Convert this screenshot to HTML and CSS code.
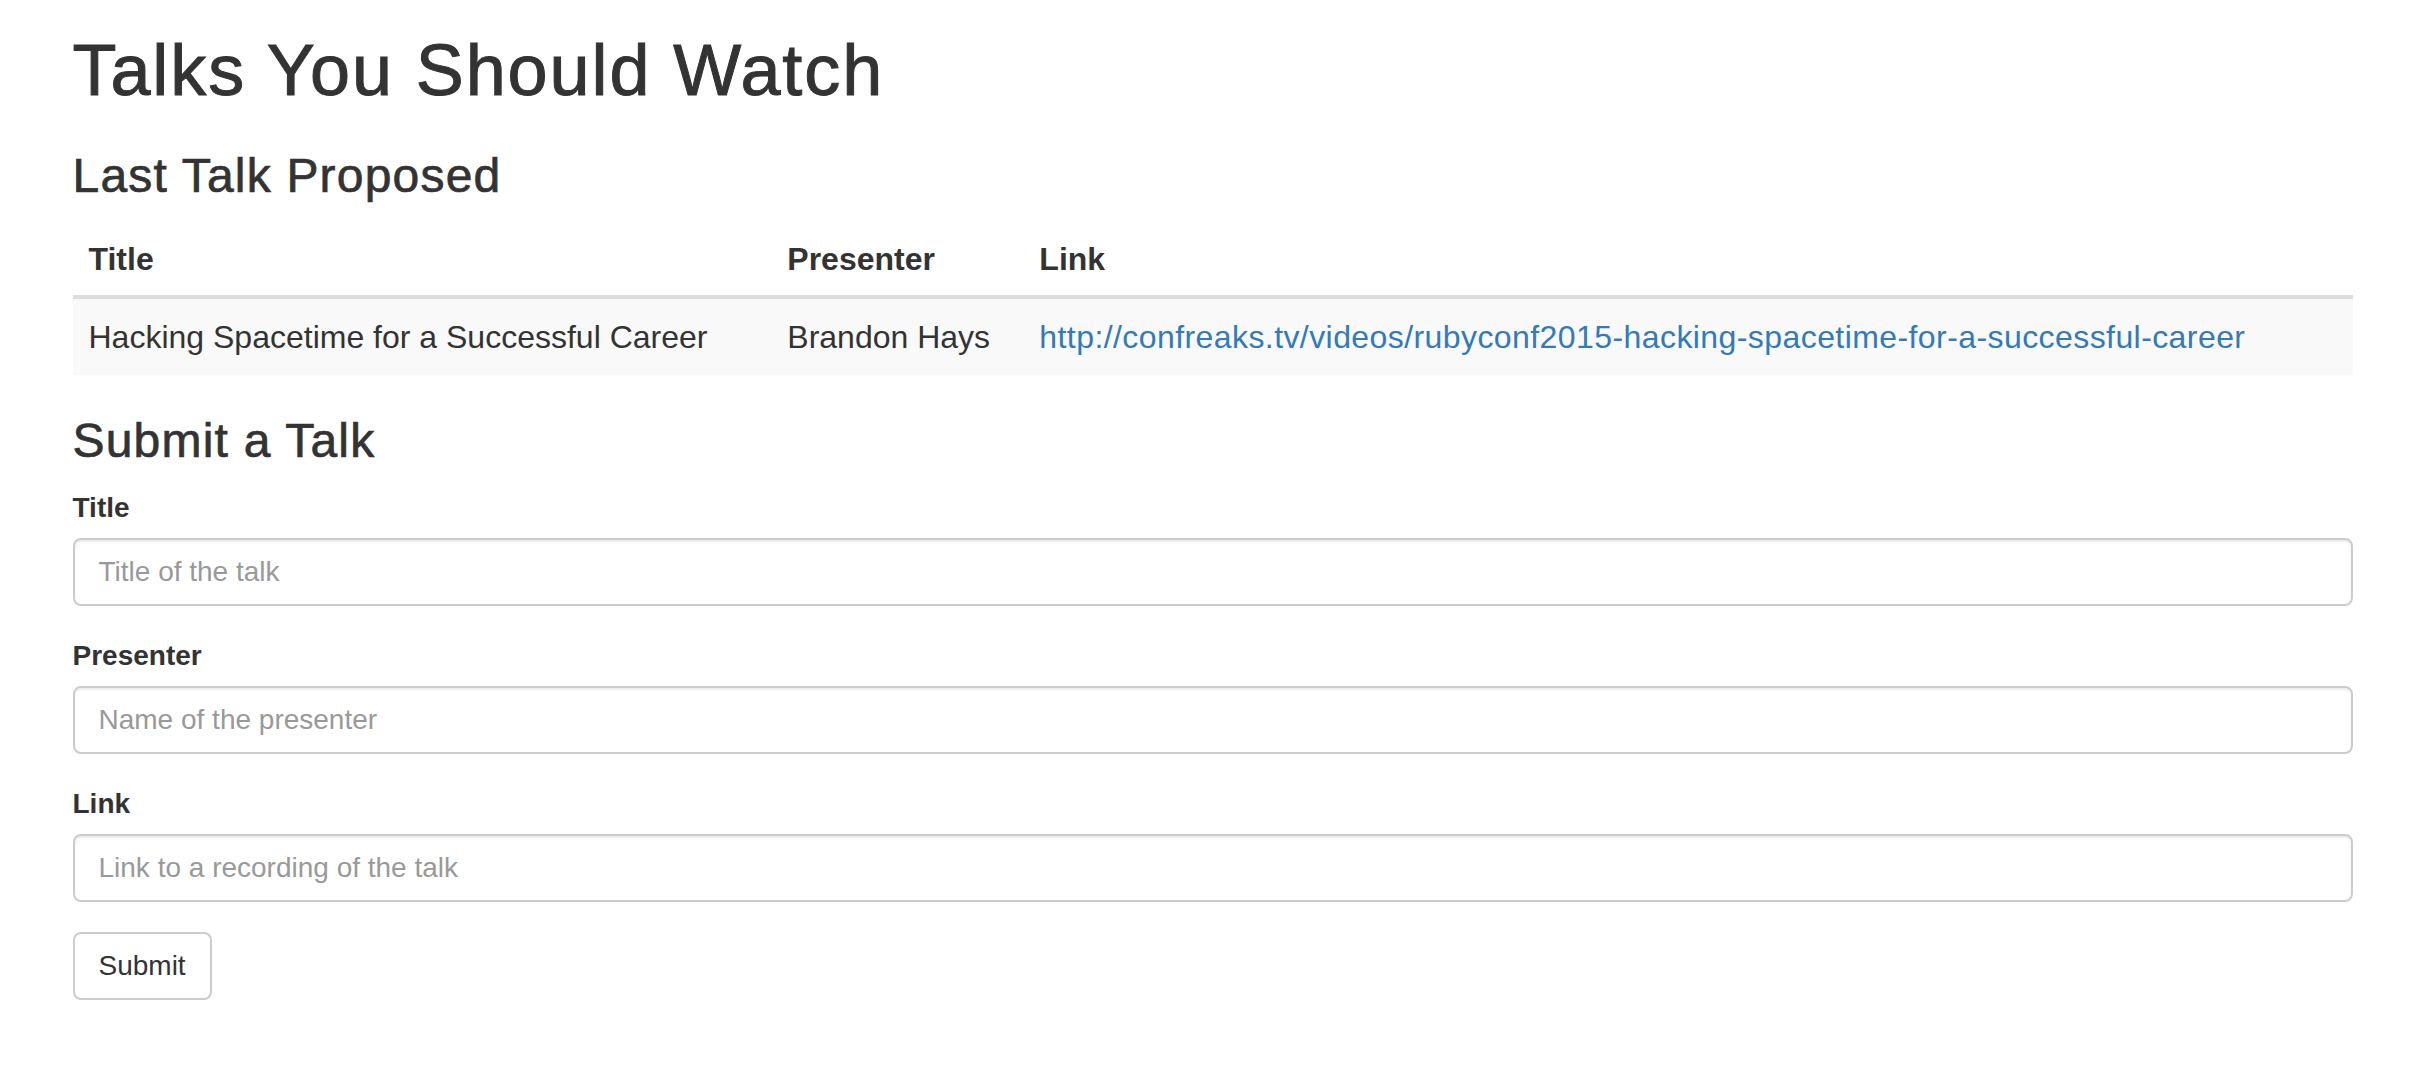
FILE: index.html
```html
<!DOCTYPE html>
<html lang="en">
<head>
<meta charset="utf-8">
<title>Talks You Should Watch</title>
<link rel="stylesheet" href="styles.css">
</head>
<body>
<div class="container">
  <h1 class="page-title">Talks You Should Watch</h1>
  <h3 class="section-title">Last Talk Proposed</h3>
  <table class="talk-table">
    <thead>
      <tr><th>Title</th><th>Presenter</th><th>Link</th></tr>
    </thead>
    <tbody>
      <tr>
        <td>Hacking Spacetime for a Successful Career</td>
        <td>Brandon Hays</td>
        <td><a class="talk-link" href="#">http://confreaks.tv/videos/rubyconf2015-hacking-spacetime-for-a-successful-career</a></td>
      </tr>
    </tbody>
  </table>
  <h3 class="section-title">Submit a Talk</h3>
  <form class="talk-form">
    <div class="form-group">
      <label class="form-label" for="title">Title</label>
      <input class="form-control" id="title" type="text" placeholder="Title of the talk">
    </div>
    <div class="form-group">
      <label class="form-label" for="presenter">Presenter</label>
      <input class="form-control" id="presenter" type="text" placeholder="Name of the presenter">
    </div>
    <div class="form-group">
      <label class="form-label" for="link">Link</label>
      <input class="form-control" id="link" type="text" placeholder="Link to a recording of the talk">
    </div>
    <button class="btn" type="button">Submit</button>
  </form>
</div>
</body>
</html>
```
FILE: styles.css
```css
* { box-sizing: border-box; }
html, body { margin: 0; padding: 0; }
body {
  font-family: "Liberation Sans", Arial, Helvetica, sans-serif;
  font-size: 28px;
  line-height: 40px;
  color: #333;
  background: #fff;
}
.container {
  width: 2340px;
  margin: 0 auto;
  padding: 0 30px;
}
.page-title {
  font-size: 72px;
  line-height: 1.1;
  font-weight: 500;
  letter-spacing: 1.9px;
  -webkit-text-stroke: 1px #333;
  margin: 31px 0 20px;
}
.section-title {
  font-size: 48px;
  line-height: 1.1;
  font-weight: 500;
  letter-spacing: 1.2px;
  -webkit-text-stroke: 0.7px #333;
  margin: 40px 0 20px;
}
.talk-table {
  width: 100%;
  border-collapse: collapse;
  border-spacing: 0;
  margin-bottom: 40px;
  font-size: 32px;
}
.talk-table th, .talk-table td {
  padding: 16px;
  text-align: left;
  vertical-align: top;
  line-height: 40px;
}
.talk-table th {
  font-weight: bold;
  vertical-align: bottom;
  border-bottom: 4px solid #ddd;
}
.talk-table td {
  padding-top: 18px;
  padding-bottom: 18px;
  border-top: 2px solid #ddd;
}
.talk-table tbody tr:nth-child(odd) { background: #f9f9f9; }
.talk-link { color: #337ab7; text-decoration: none; letter-spacing: 0.42px; }
.talk-form { margin: 0; }
.form-group { margin-bottom: 30px; }
.form-label {
  display: inline-block;
  font-weight: bold;
  margin-bottom: 10px;
}
.form-control {
  display: block;
  width: 100%;
  height: 68px;
  padding: 12px 24px;
  font-family: inherit;
  font-size: 28px;
  line-height: 40px;
  color: #555;
  background: #fff;
  border: 2px solid #ccc;
  border-radius: 8px;
  box-shadow: inset 0 2px 2px rgba(0,0,0,.075);
  margin: 0;
}
.form-control::placeholder { color: #999; }
.btn {
  display: inline-block;
  padding: 12px 24px;
  font-family: inherit;
  font-size: 28px;
  line-height: 40px;
  color: #333;
  background: #fff;
  border: 2px solid #ccc;
  border-radius: 8px;
  margin: 0;
  cursor: pointer;
}
```
